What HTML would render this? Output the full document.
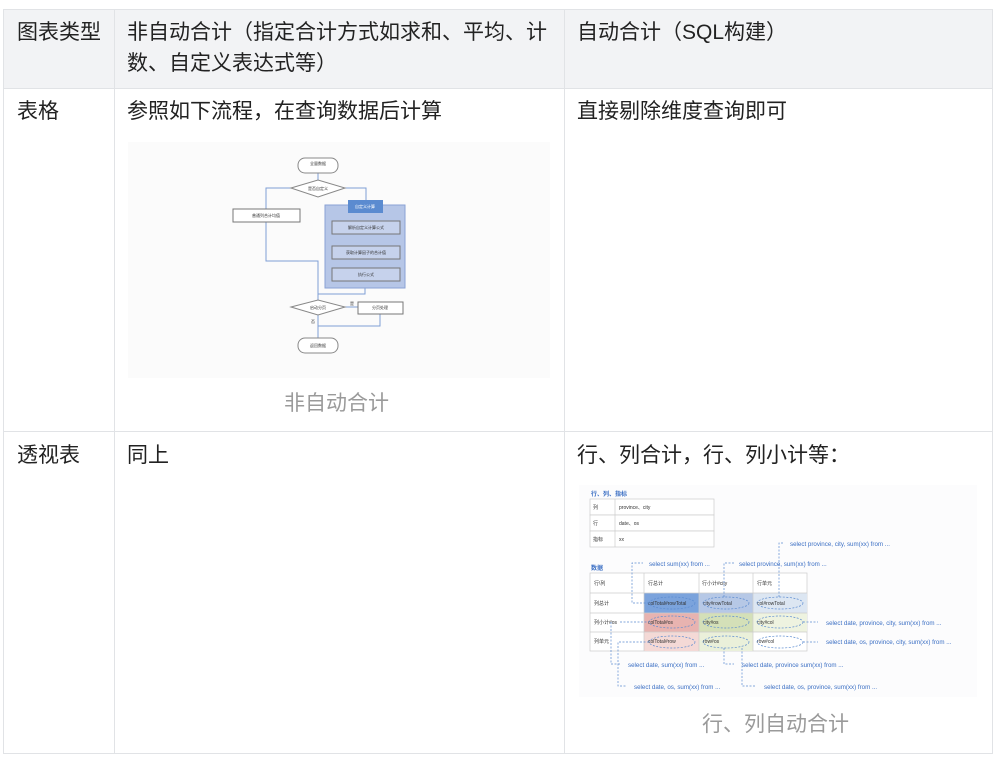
<!DOCTYPE html>
<html><head><meta charset="utf-8">
<style>
html,body{margin:0;padding:0;background:#fff;width:995px;height:758px;overflow:hidden}
body{font-family:"Liberation Sans","Noto Sans CJK SC",sans-serif;color:#222;position:relative}
.a{position:absolute}
.t{position:absolute;font-size:21px;line-height:31px;white-space:nowrap}
.cap{position:absolute;font-size:21px;color:#9a9a9a;line-height:24px}
.hl{position:absolute;background:#e1e3e6;height:1px}
.vl{position:absolute;background:#e1e3e6;width:1px}
svg text{font-family:"Liberation Sans","Noto Sans CJK SC",sans-serif}
</style></head><body>
<div class="a" style="left:3px;top:9px;width:990px;height:79px;background:#f2f3f5"></div>
<div class="hl" style="left:3px;top:9px;width:990px"></div>
<div class="hl" style="left:3px;top:88px;width:990px"></div>
<div class="hl" style="left:3px;top:431px;width:990px"></div>
<div class="hl" style="left:3px;top:753px;width:990px"></div>
<div class="vl" style="left:3px;top:9px;height:745px"></div>
<div class="vl" style="left:114px;top:9px;height:745px"></div>
<div class="vl" style="left:564px;top:9px;height:745px"></div>
<div class="vl" style="left:992px;top:9px;height:745px"></div>

<div class="t" style="left:17px;top:17px">图表类型</div>
<div class="t" style="left:127px;top:17px">非自动合计（指定合计方式如求和、平均、计<br>数、自定义表达式等）</div>
<div class="t" style="left:577px;top:17px">自动合计（SQL构建）</div>
<div class="t" style="left:17px;top:96px">表格</div>
<div class="t" style="left:127px;top:96px">参照如下流程，在查询数据后计算</div>
<div class="t" style="left:577px;top:96px">直接剔除维度查询即可</div>
<div class="t" style="left:17px;top:440px">透视表</div>
<div class="t" style="left:127px;top:440px">同上</div>
<div class="t" style="left:577px;top:440px">行、列合计，行、列小计等：</div>

<div class="cap" style="left:284px;top:392px">非自动合计</div>
<div class="cap" style="left:702px;top:713px">行、列自动合计</div>

<svg class="a" style="left:128px;top:142px" width="422" height="236" viewBox="128 142 422 236">
<rect x="128" y="142" width="422" height="236" fill="#fbfbfb"/>
<g fill="none" stroke="#7f9fd6" stroke-width="1">
<path d="M318 173V180"/><path d="M291 188H266V209"/><path d="M345 188H366V200"/>
<path d="M266 222V261H318V300"/><path d="M365 288V294H318"/>
<path d="M366 234V246M366 259V268"/>
<path d="M345 307H358"/><path d="M380 314V326H318"/><path d="M318 315V338"/>
</g>
<rect x="298" y="158" width="40" height="15" rx="7" fill="#fff" stroke="#888"/>
<text x="318" y="165" font-size="4" text-anchor="middle" fill="#333">全量数据</text>
<polygon points="291,188 318,180 345,188 318,197" fill="#fff" stroke="#888"/>
<text x="318" y="190" font-size="4" text-anchor="middle" fill="#333">是否自定义</text>
<rect x="233" y="209" width="67" height="13" fill="#fff" stroke="#777"/>
<text x="266" y="217" font-size="4" text-anchor="middle" fill="#333">普通列合计均值</text>
<rect x="325" y="205" width="80" height="83" fill="#b6c6e7" stroke="#8aa2d4"/>
<rect x="348" y="200" width="35" height="13" fill="#5b8bd0"/>
<text x="365" y="208" font-size="4" text-anchor="middle" fill="#fff">自定义计算</text>
<rect x="332" y="221" width="68" height="13" fill="#c6d2ec" stroke="#777"/>
<rect x="332" y="246" width="68" height="13" fill="#c6d2ec" stroke="#777"/>
<rect x="332" y="268" width="68" height="13" fill="#c6d2ec" stroke="#777"/>
<text x="366" y="229" font-size="4" text-anchor="middle" fill="#333">解析自定义计算公式</text>
<text x="366" y="254" font-size="4" text-anchor="middle" fill="#333">获取计算因子的合计值</text>
<text x="366" y="276" font-size="4" text-anchor="middle" fill="#333">执行公式</text>
<polygon points="291,307 318,300 345,307 318,315" fill="#fff" stroke="#888"/>
<text x="318" y="309" font-size="4" text-anchor="middle" fill="#333">启动分页</text>
<rect x="358" y="302" width="45" height="12" fill="#fff" stroke="#777"/>
<text x="380" y="309" font-size="4" text-anchor="middle" fill="#333">分页处理</text>
<text x="350" y="305" font-size="4" fill="#333">是</text><text x="311" y="323" font-size="4" fill="#333">否</text>
<rect x="298" y="338" width="40" height="15" rx="7" fill="#fff" stroke="#888"/>
<text x="318" y="347" font-size="4" text-anchor="middle" fill="#333">返回数据</text>
</svg>

<svg class="a" style="left:579px;top:485px" width="398" height="212" viewBox="579 485 398 212">
<rect x="579" y="485" width="398" height="212" fill="#fcfcfd"/>
<text x="591" y="496" font-size="6" fill="#3b6fc4" font-weight="bold">行、列、指标</text>
<g fill="#fff" stroke="#ccc" stroke-width="0.7">
<rect x="590" y="499" width="124" height="16"/><rect x="590" y="515" width="124" height="16"/><rect x="590" y="531" width="124" height="16"/>
</g>
<path d="M615 499V547" stroke="#ccc" stroke-width="0.7"/>
<g font-size="5" fill="#333">
<text x="593" y="509">列</text><text x="619" y="509">province、city</text>
<text x="593" y="525">行</text><text x="619" y="525">date、os</text>
<text x="593" y="541">指标</text><text x="619" y="541">xx</text>
</g>
<text x="591" y="570" font-size="6" fill="#3b6fc4" font-weight="bold">数据</text>
<rect x="590" y="573" width="217" height="78" fill="#fff" stroke="#ccc" stroke-width="0.7"/>
<rect x="644" y="593" width="55" height="20" fill="#7ba3dc"/><rect x="699" y="593" width="54" height="20" fill="#b6c8e6"/><rect x="753" y="593" width="54" height="20" fill="#dce6f2"/>
<rect x="644" y="613" width="55" height="19" fill="#e8b3b0"/><rect x="699" y="613" width="54" height="19" fill="#d4e0b8"/><rect x="753" y="613" width="54" height="19" fill="#eef3e0"/>
<rect x="644" y="632" width="55" height="19" fill="#f4d9d6"/><rect x="699" y="632" width="54" height="19" fill="#eaf0da"/>
<g stroke="#ccc" stroke-width="0.7"><path d="M590 593H807M590 613H807M590 632H807M644 573V651M699 573V651M753 573V651"/></g>
<g font-size="5" fill="#333">
<text x="594" y="585">行\列</text><text x="648" y="585">行总计</text><text x="702" y="585">行小计#city</text><text x="757" y="585">行单元</text>
<text x="594" y="605">列总计</text><text x="594" y="624">列小计#os</text><text x="594" y="643">列单元</text>
<text x="648" y="605">colTotal#rowTotal</text><text x="703" y="605">city#rowTotal</text><text x="757" y="605">col#rowTotal</text>
<text x="648" y="624">colTotal#os</text><text x="703" y="624">city#os</text><text x="757" y="624">city#col</text>
<text x="648" y="643">colTotal#row</text><text x="703" y="643">row#os</text><text x="757" y="643">row#col</text>
</g>
<g fill="none" stroke="#5b8bd0" stroke-width="0.7" stroke-dasharray="2,1.5">
<ellipse cx="672" cy="603" rx="23" ry="6"/><ellipse cx="726" cy="603" rx="23" ry="6"/><ellipse cx="780" cy="603" rx="23" ry="6"/>
<ellipse cx="672" cy="622" rx="23" ry="6"/><ellipse cx="726" cy="622" rx="23" ry="6"/><ellipse cx="780" cy="622" rx="23" ry="6"/>
<ellipse cx="672" cy="642" rx="23" ry="6"/><ellipse cx="726" cy="642" rx="23" ry="6"/><ellipse cx="780" cy="642" rx="23" ry="6"/>
<path d="M649 603H632V563H643"/><path d="M724 597V563H735"/><path d="M779 597V543H783"/>
<path d="M803 622H818"/><path d="M803 642H818"/>
<path d="M620 622H649M611 622V664H620"/><path d="M649 642H618V686H627"/>
<path d="M724 648V664H734"/><path d="M742 648V686H756"/>
</g>
<g font-size="6.2" fill="#3b6fc4">
<text x="790" y="546">select province, city,  sum(xx) from ...</text>
<text x="649" y="566">select sum(xx) from ...</text>
<text x="739" y="566">select province,  sum(xx) from ...</text>
<text x="826" y="625">select date, province, city, sum(xx) from ...</text>
<text x="826" y="644">select date, os,  province, city, sum(xx) from ...</text>
<text x="628" y="667">select date, sum(xx) from ...</text>
<text x="742" y="667">select date, province sum(xx) from ...</text>
<text x="634" y="689">select date, os, sum(xx) from ...</text>
<text x="764" y="689">select date, os, province, sum(xx) from ...</text>
</g>
</svg>
</body></html>
